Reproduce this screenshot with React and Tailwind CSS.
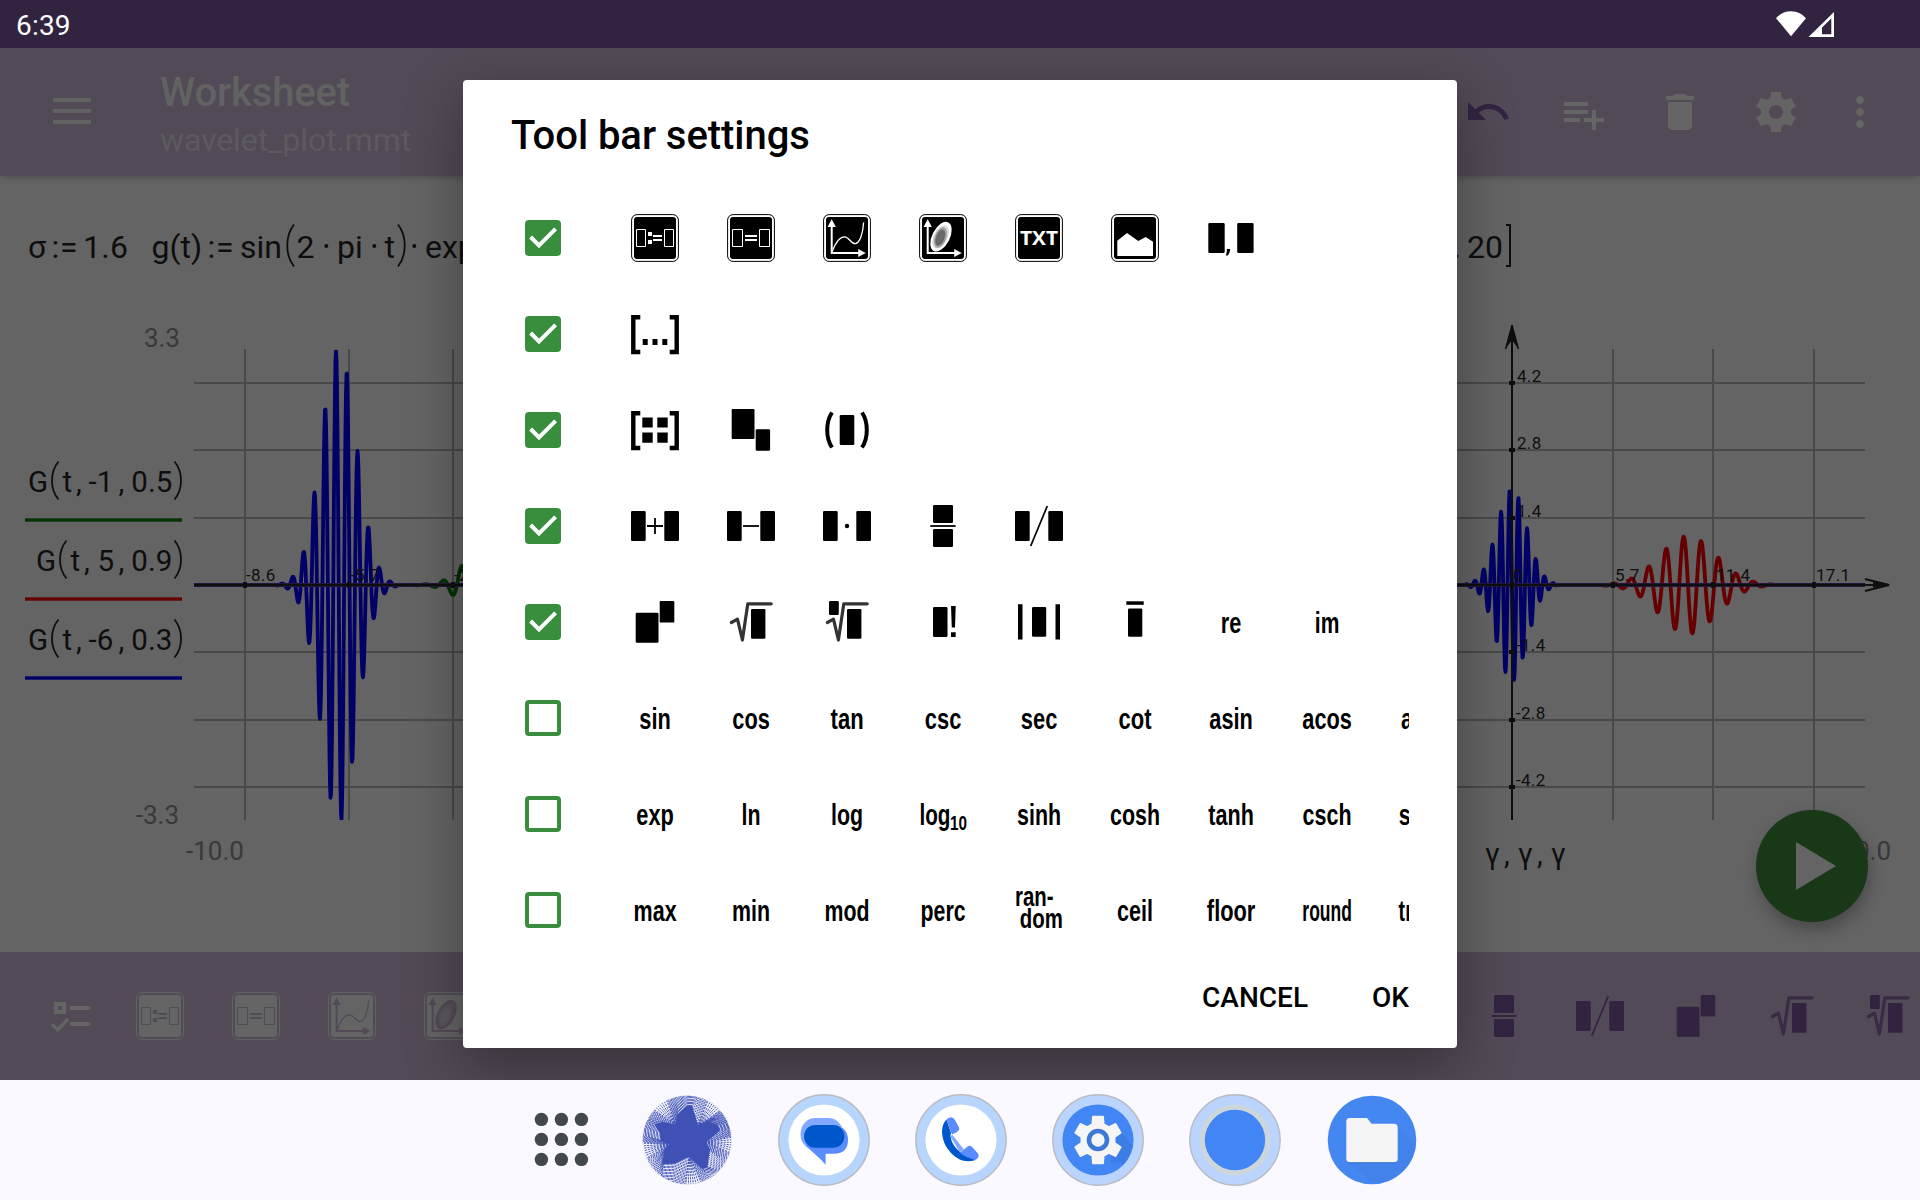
import React from "react";

/* ---------- toolbar glyphs, drawn on a 48x48 grid ---------- */

const Box = ({ x, y, w, h, r = 1.2 }) => (
  <rect x={x} y={y} width={w} height={h} rx={r} fill="currentColor" />
);

const Framed = ({ children }) => (
  <>
    <rect x="0.6" y="0.6" width="46.8" height="46.8" rx="5.5" fill="none" stroke="currentColor" strokeWidth="1" />
    <rect x="3" y="3" width="42" height="42" rx="3" fill="currentColor" />
    {children}
  </>
);

const Root = () => (
  <path
    d="M4.4 24.5L10.5 21.2L15.4 42L20.8 5.8H44.2"
    fill="none"
    stroke="currentColor"
    strokeOpacity="0.8"
    strokeWidth="3.2"
    strokeLinecap="round"
    strokeLinejoin="round"
  />
);

const Pair = () => (
  <>
    <Box x={0} y={9} w={14.7} h={30} />
    <Box x={33.3} y={9} w={14.7} h={30} />
  </>
);

const Brackets = () => (
  <path
    d="M9.3 7.2H2.3V42H9.3M38.7 7.2H45.7V42H38.7"
    fill="none"
    stroke="currentColor"
    strokeWidth="4.4"
  />
);

const AxisArrows = ({ hole }) => (
  <>
    <path d="M8.7 10V39H37" fill="none" stroke={hole} strokeWidth="2" />
    <path d="M8.7 5.3L12.9 12.9H4.5ZM42.7 39L35.2 35V43Z" fill={hole} />
  </>
);

const glyphs = {
  assign: (h) => (
    <Framed>
      <path d="M5.5 15.5H14.5V32.5H5.5ZM33.5 15.5H42.5V32.5H33.5Z" fill="none" stroke={h} strokeWidth="1" />
      <path d="M17 18H21V22H17ZM17 26H21V30H17ZM22 21H31V23H22ZM22 25H31V27H22Z" fill={h} />
    </Framed>
  ),
  equal: (h) => (
    <Framed>
      <path d="M5.5 15.5H15.5V32.5H5.5ZM32.5 15.5H42.5V32.5H32.5Z" fill="none" stroke={h} strokeWidth="1" />
      <path d="M18 21H30V23H18ZM18 25H30V27H18Z" fill={h} />
    </Framed>
  ),
  plot: (h) => (
    <Framed>
      <AxisArrows hole={h} />
      <path d="M9 38C13 27 17.5 22.6 21.8 22.8C26 23 28 30 32.4 29.6C37 29 40 19 40.6 8.5" fill="none" stroke={h} strokeWidth="1.3" />
    </Framed>
  ),
  surface: (h) => (
    <Framed>
      <g transform="rotate(27 22 22.7)">
        <ellipse cx="22" cy="22.7" rx="8.8" ry="16" fill={h} />
        <ellipse cx="21.8" cy="23" rx="6.8" ry="12.6" fill="currentColor" opacity="0.15" />
      </g>
      <g transform="rotate(20 21.5 23.5)">
        <ellipse cx="21.5" cy="23.5" rx="5.8" ry="10.8" fill="currentColor" opacity="0.25" />
        <ellipse cx="21.3" cy="23.7" rx="4.3" ry="8.6" fill="currentColor" opacity="0.35" />
      </g>
      <AxisArrows hole={h} />
    </Framed>
  ),
  text: (h) => (
    <Framed>
      <text x="5" y="31.2" fontSize="19.6" fontWeight="700" fontFamily="'Open Sans', sans-serif" fill={h} textLength="38" lengthAdjust="spacingAndGlyphs">
        TXT
      </text>
    </Framed>
  ),
  image: (h) => (
    <Framed>
      <path d="M6.3 26.7L16 19L27.3 27L34.7 23L42 27.7V42H6.3Z" fill={h} />
    </Framed>
  ),
  comma: () => (
    <>
      <Box x={1.3} y={9} w={16.4} h={30} />
      <Box x={30.2} y={9} w={16.4} h={30} />
      <path d="M19.8 35H23.2C23 38 22 40 20.6 41.4H18.8C19.6 39.6 20 37.5 19.8 35Z" fill="currentColor" />
    </>
  ),
  range: () => (
    <>
      <Brackets />
      <path d="M11.7 29H16.7V35H11.7ZM21.5 29H26.5V35H21.5ZM31.3 29H36.3V35H31.3Z" fill="currentColor" />
    </>
  ),
  matrix: () => (
    <>
      <Brackets />
      <path d="M11.3 11.5H21.7V21.5H11.3ZM26.3 11.5H36.7V21.5H26.3ZM11.3 26.5H21.7V36.7H11.3ZM26.3 26.5H36.7V36.7H26.3Z" fill="currentColor" />
    </>
  ),
  subscript: () => (
    <>
      <Box x={4.7} y={3} w={22.8} h={30} />
      <Box x={28.7} y={23.3} w={14.4} h={21.5} />
    </>
  ),
  parens: () => (
    <>
      <Box x={16.7} y={9} w={14.6} h={30} />
      <path d="M9 6.5C2.6 16 2.6 32 9 41.5M39 6.5C45.4 16 45.4 32 39 41.5" fill="none" stroke="currentColor" strokeWidth="4" />
    </>
  ),
  plus: () => (
    <>
      <Pair />
      <path d="M16 24H32M24 16V32" stroke="currentColor" strokeWidth="1.8" />
    </>
  ),
  minus: () => (
    <>
      <Pair />
      <path d="M16 24H32" stroke="currentColor" strokeWidth="1.8" />
    </>
  ),
  times: () => (
    <>
      <Pair />
      <circle cx="24" cy="24" r="2.2" fill="currentColor" />
    </>
  ),
  fraction: () => (
    <>
      <Box x={14} y={3} w={20} h={18} />
      <Box x={14} y={27} w={20} h={18} />
      <path d="M11.3 24H36.6" stroke="currentColor" strokeWidth="1.8" />
    </>
  ),
  slash: () => (
    <>
      <Pair />
      <path d="M15.7 44L32.3 4" stroke="currentColor" strokeWidth="1.7" />
    </>
  ),
  power: () => (
    <>
      <Box x={4.7} y={14.8} w={22.8} h={30} />
      <Box x={28.7} y={3} w={14.6} h={21.6} />
    </>
  ),
  sqrt: () => (
    <>
      <Root />
      <Box x={24} y={11} w={14.4} h={29.8} />
    </>
  ),
  root: () => (
    <>
      <Root />
      <Box x={24} y={11} w={14.4} h={29.8} />
      <Box x={6} y={3} w={9.8} h={14} />
    </>
  ),
  factorial: () => (
    <>
      <Box x={14} y={9} w={14.5} h={30} />
      <path d="M32 8H36.7L36 29.5H32.8ZM32 34.3H36.7V39H32Z" fill="currentColor" />
    </>
  ),
  abs: () => (
    <>
      <Box x={17} y={9} w={14.2} h={29.8} />
      <path d="M3 6.3H7.5V41.5H3ZM40.5 6.3H45V41.5H40.5Z" fill="currentColor" />
    </>
  ),
  conj: () => (
    <>
      <Box x={17} y={10.4} w={14.3} h={28.4} />
      <path d="M15.3 3.3H32.7V6.8H15.3Z" fill="currentColor" />
    </>
  ),
};

const Label = ({ x, y = 34.7, size = 28.8, width, children }) => (
  <text x={x} y={y} fontSize={size} fontWeight="700" fontFamily="'Liberation Sans', sans-serif" textLength={width} lengthAdjust="spacingAndGlyphs" fill="currentColor">
    {children}
  </text>
);

const Glyph = ({ name, hole = "#fff" }) => (
  <svg viewBox="0 0 48 48" className="h-12 w-12 shrink-0 overflow-visible">
    {glyphs[name](hole)}
  </svg>
);

const FunctionLabel = ({ item }) => {
  const [name, ink] = item;
  const width = ink + 2;
  return (
    <svg viewBox="0 0 48 48" className="h-12 w-12 shrink-0 overflow-visible">
      {name === "log10" ? (
        <>
          <Label x={0.4} width={31}>log</Label>
          <Label x={31} y={40} size={19.6} width={17}>10</Label>
        </>
      ) : name === "random" ? (
        <>
          <Label x={0} y={19.7} size={28} width={38.5}>ran-</Label>
          <Label x={4.8} y={42.3} size={28} width={43}>dom</Label>
        </>
      ) : (
        <Label x={24.1 - width / 2} width={width}>{name}</Label>
      )}
    </svg>
  );
};

/* ---------- dialog ---------- */

const rows = [
  { on: true, icons: ["assign", "equal", "plot", "surface", "text", "image", "comma"] },
  { on: true, icons: ["range"] },
  { on: true, icons: ["matrix", "subscript", "parens"] },
  { on: true, icons: ["plus", "minus", "times", "fraction", "slash"] },
  { on: true, icons: ["power", "sqrt", "root", "factorial", "abs", "conj", ["re", 18.5], ["im", 22.5]] },
  { on: false, icons: [["sin", 29.5], ["cos", 35.5], ["tan", 31], ["csc", 34.5], ["sec", 34.5], ["cot", 31], ["asin", 41.5], ["acos", 47.5], ["atan", 42]] },
  { on: false, icons: [["exp", 35.5], ["ln", 17], ["log", 30], ["log10", 46], ["sinh", 42], ["cosh", 48], ["tanh", 43.5], ["csch", 47], ["sech", 46.5]] },
  { on: false, icons: [["max", 41], ["min", 36], ["mod", 43], ["perc", 43], ["random", 46], ["ceil", 34], ["floor", 46.5], ["round", 47.5], ["trunc", 47]] },
];

const Checkbox = ({ on }) =>
  on ? (
    <span className="flex h-9 w-9 shrink-0 rounded bg-[#388e3c]">
      <svg viewBox="0 0 36 36" className="h-9 w-9">
        <path d="M5.6 17L14 25.4L30.6 8.8" fill="none" stroke="#fff" strokeWidth="4" />
      </svg>
    </span>
  ) : (
    <span className="h-9 w-9 shrink-0 rounded border-4 border-[#388e3c]" />
  );

const Dialog = () => (
  <div className="flex h-[968px] w-[994px] flex-col rounded-[4px] bg-white text-black shadow-[0_18px_56px_rgba(0,0,0,0.34)]">
    <h2 className="h-[110px] pl-12 pt-8 text-[40px] leading-[48px] font-medium tracking-[-0.05px]">Tool bar settings</h2>
    <div className="flex flex-col">
      {rows.map((row, i) => (
        <div key={i} className="flex h-24 items-center pr-12 pl-[62px]">
          <Checkbox on={row.on} />
          <div className="ml-[70px] flex flex-1 items-center gap-12 overflow-hidden">
            {row.icons.map((it, j) =>
              typeof it === "string" ? <Glyph key={j} name={it} /> : <FunctionLabel key={j} item={it} />
            )}
          </div>
        </div>
      ))}
    </div>
    <div className="flex flex-1 items-start justify-end gap-16 pt-[23px] pr-12 text-[28px] leading-[34px] font-medium">
      <button>CANCEL</button>
      <button>OK</button>
    </div>
  </div>
);

/* ---------- worksheet ---------- */

const INK = "#0e0e0e";

const wave = (from, to, center, period, amp, spread) => {
  const pts = [];
  for (let x = from; x <= to; x += 0.5) {
    const d = x - center;
    const y = 585 + amp * Math.exp((-d * d) / spread) * Math.sin((2 * Math.PI * d) / period);
    pts.push(`${x.toFixed(1)} ${y.toFixed(1)}`);
  }
  return "M" + pts.join("L");
};

const Curve = ({ d, color }) => (
  <path d={d} fill="none" stroke={color} strokeWidth="3.8" strokeLinejoin="round" />
);

const gridY = [383, 450, 518, 652, 720, 787];

const LeftChart = () => (
  <svg viewBox="183 310 280 642" className="h-[642px] w-[280px]" fontFamily="Roboto, sans-serif">
    <defs>
      <clipPath id="plotArea"><rect x="194" y="350" width="300" height="470" /></clipPath>
    </defs>
    <g stroke="#494949" strokeWidth="2">
      {gridY.map((y) => <path key={y} d={`M194 ${y}H463`} />)}
      {[245, 349, 453].map((x) => <path key={x} d={`M${x} 349V820`} />)}
    </g>
    <g clipPath="url(#plotArea)">
      <Curve d={wave(415, 465, 520.6, 18.2, 140, 1744)} color="#003300" />
      <Curve d={wave(276, 400, 338.7, 10.85, 237, 628)} color="#000066" />
      <path d="M194 585H463" stroke="#241640" strokeWidth="4" />
    </g>
    <path d="M194 585H463" stroke={INK} strokeWidth="2" />
    {[245, 349, 453].map((x) => <path key={x} d={`M${x} 582V588`} stroke={INK} strokeWidth="4" />)}
    <g fill={INK} fontSize="17" letterSpacing="0.3">
      <text x="246" y="581">-8.6</text>
      <text x="350" y="581">-5.7</text>
      <text x="454" y="581">-2.9</text>
    </g>
    <text x="186" y="860" fontSize="26" fill="#393939">-10.0</text>
  </svg>
);

const RightChart = () => (
  <svg viewBox="1457 310 463 642" className="h-[642px] w-[463px]" fontFamily="Roboto, sans-serif">
    <g stroke="#494949" strokeWidth="2">
      {gridY.map((y) => <path key={y} d={`M1457 ${y}H1865`} />)}
      {[1613, 1713, 1814].map((x) => <path key={x} d={`M${x} 349V820`} />)}
    </g>
    <Curve d={wave(1603, 1775, 1688, 17.5, 49, 1592)} color="#660000" />
    <Curve d={wave(1465, 1557, 1511.9, 8.72, 96, 440)} color="#000066" />
    <path d="M1457 585H1865" stroke="#241640" strokeWidth="4" />
    <path d="M1457 585H1880M1512 340V820" stroke={INK} strokeWidth="2" />
    <path d="M1512 325L1518.6 349L1512 340L1505.4 349Z" fill={INK} />
    <path d="M1512 325L1518.4 349M1512 325L1505.6 349" stroke={INK} strokeWidth="1.4" />
    <path d="M1865 579L1889 585L1865 591" fill="none" stroke={INK} strokeWidth="2" />
    <path d="M1873 582L1889 585L1873 588Z" fill={INK} />
    {[1512, 1613, 1713, 1814].map((x) => <path key={x} d={`M${x} 582V588`} stroke={INK} strokeWidth="4" />)}
    {gridY.map((y) => <path key={y} d={`M1509 ${y}H1515`} stroke={INK} strokeWidth="4" />)}
    <g fill={INK} fontSize="17" letterSpacing="0.3">
      <text x="1517" y="382">4.2</text>
      <text x="1517" y="449">2.8</text>
      <text x="1517" y="517">1.4</text>
      <text x="1516" y="651">-1.4</text>
      <text x="1516" y="719">-2.8</text>
      <text x="1516" y="786">-4.2</text>
      <text x="1513" y="581">0</text>
      <text x="1615" y="581">5.7</text>
      <text x="1716" y="581">11.4</text>
      <text x="1816" y="581">17.1</text>
    </g>
    <text x="1891" y="860" fontSize="26" fill="#393939" textAnchor="end">20.0</text>
    <g fill={INK} fontSize="29">
      <text x="1485" y="863.5">γ</text>
      <text x="1504" y="863.5">,</text>
      <text x="1518" y="863.5">γ</text>
      <text x="1537" y="863.5">,</text>
      <text x="1551" y="863.5">γ</text>
    </g>
  </svg>
);

const legend = [
  { color: "#003300", open: 52, parts: [[28, "G"], [62.5, "t"], [76, ","], [88.5, "-1"], [118.5, ","], [131.3, "0.5"]] },
  { color: "#660000", open: 60, parts: [[36, "G"], [70.5, "t"], [84, ","], [97.5, "5"], [118.5, ","], [131.3, "0.9"]] },
  { color: "#000066", open: 52, parts: [[28, "G"], [62.5, "t"], [76, ","], [88.5, "-6"], [118.5, ","], [131.3, "0.3"]] },
];

const LegendItem = ({ item }) => (
  <svg viewBox="25 0 158 79" className="h-[79px] w-[158px]" fontFamily="Roboto, sans-serif">
    <g fill={INK} fontSize="29.5">
      {item.parts.map(([x, t], i) => <text key={i} x={x} y="47.7">{t}</text>)}
    </g>
    <path
      d={`M${item.open + 6.5} 17.5C${item.open - 2.2} 28 ${item.open - 2.2} 45 ${item.open + 6.5} 55.5M174.5 17.5C183.2 28 183.2 45 174.5 55.5`}
      fill="none"
      stroke={INK}
      strokeWidth="1.8"
    />
    <rect x="25" y="74.3" width="157" height="3.4" fill={item.color} />
  </svg>
);

const Formula = () => (
  <svg viewBox="0 176 463 134" className="h-[134px] w-[463px]" fontFamily="Roboto, sans-serif" fontSize="32" fill={INK}>
    <text x="28" y="258">σ</text>
    <text x="51.5" y="258" textLength="26">:=</text>
    <text x="83" y="258" textLength="45">1.6</text>
    <text x="151.5" y="258">g(t)</text>
    <text x="207.5" y="258" textLength="26">:=</text>
    <text x="240" y="258">sin</text>
    <text x="296.5" y="258">2</text>
    <text x="337" y="258">pi</text>
    <text x="384.5" y="258">t</text>
    <text x="425" y="258">exp</text>
    <circle cx="326.3" cy="246" r="2" />
    <circle cx="374.3" cy="246" r="2" />
    <circle cx="414.3" cy="246" r="2" />
    <path d="M294 224.5C285 236 285 255 294 266.5M398 224.5C407 236 407 255 398 266.5" fill="none" stroke={INK} strokeWidth="1.8" />
  </svg>
);

const FormulaTail = () => (
  <svg viewBox="1457 176 463 134" className="h-[134px] w-[463px]" fontFamily="Roboto, sans-serif" fontSize="32" fill={INK}>
    <text x="1452.5" y="258">.</text>
    <text x="1467" y="258">20</text>
    <path d="M1506 225H1510V266H1506" fill="none" stroke={INK} strokeWidth="2" />
  </svg>
);

const MdIcon = ({ d, dy = 0, tint = "text-[#646464]" }) => (
  <svg viewBox="0 0 24 24" className={`h-12 w-12 ${tint}`}>
    <path d={d} fill="currentColor" transform={`translate(0 ${dy})`} />
  </svg>
);

const AppBar = () => (
  <header className="relative flex h-32 shrink-0 items-center bg-[#524a56] shadow-[0_2px_6px_rgba(0,0,0,0.18)]">
    <svg viewBox="0 0 38 26" className="mb-[2px] ml-[53px] h-[26px] w-[38px] text-[#626262]">
      <path d="M0 0H38V4H0ZM0 11H38V15H0ZM0 22H38V26H0Z" fill="currentColor" />
    </svg>
    <div className="ml-[69px] flex flex-1 flex-col pt-2">
      <span className="text-[40px] leading-[48px] font-medium tracking-[-0.15px] text-[#626262]">Worksheet</span>
      <span className="text-[32px] leading-[46px] tracking-[-0.1px] text-[#5d5a5f]">wavelet_plot.mmt</span>
    </div>
    <div className="flex items-center gap-12">
      <MdIcon tint="text-[#322441]" d="M12.5 8c-2.65 0-5.05.99-6.9 2.6L2 7v9h9l-3.62-3.62c1.39-1.16 3.16-1.88 5.12-1.88 3.54 0 6.55 2.31 7.6 5.5l2.37-.78C21.08 11.03 17.15 8 12.5 8z" />
      <MdIcon dy={1} d="M14 10H2v2h12v-2zm0-4H2v2h12V6zm4 8v-4h-2v4h-4v2h4v4h2v-4h4v-2h-4zM2 16h8v-2H2v2z" />
      <MdIcon d="M6 19c0 1.1.9 2 2 2h8c1.1 0 2-.9 2-2V7H6v12zM19 4h-3.5l-1-1h-5l-1 1H5v2h14V4z" />
      <MdIcon d="M19.43 12.98c.04-.32.07-.64.07-.98s-.03-.66-.07-.98l2.11-1.65c.19-.15.24-.42.12-.64l-2-3.46c-.12-.22-.39-.3-.61-.22l-2.49 1c-.52-.4-1.08-.73-1.69-.98l-.38-2.65C14.46 2.18 14.25 2 14 2h-4c-.25 0-.46.18-.49.42l-.38 2.65c-.61.25-1.17.59-1.69.98l-2.49-1c-.23-.09-.49 0-.61.22l-2 3.46c-.13.22-.07.49.12.64l2.11 1.65c-.04.32-.07.65-.07.98s.03.66.07.98l-2.11 1.65c-.19.15-.24.42-.12.64l2 3.46c.12.22.39.3.61.22l2.49-1c.52.4 1.08.73 1.69.98l.38 2.65c.03.24.24.42.49.42h4c.25 0 .46-.18.49-.42l.38-2.65c.61-.25 1.17-.59 1.69-.98l2.49 1c.23.09.49 0 .61-.22l2-3.46c.12-.22.07-.49-.12-.64l-2.11-1.65zM12 15.5c-1.93 0-3.5-1.57-3.5-3.5s1.57-3.5 3.5-3.5 3.5 1.57 3.5 3.5-1.57 3.5-3.5 3.5z" />
    </div>
    <div className="mr-9 ml-9">
      <MdIcon d="M12 8c1.1 0 2-.9 2-2s-.9-2-2-2-2 .9-2 2 .9 2 2 2zm0 2c-1.1 0-2 .9-2 2s.9 2 2 2 2-.9 2-2-.9-2-2-2zm0 6c-1.1 0-2 .9-2 2s.9 2 2 2 2-.9 2-2-.9-2-2-2z" />
    </div>
  </header>
);

const Worksheet = () => (
  <main className="relative flex h-[776px] shrink-0 flex-col bg-[#646464]">
    <div className="flex justify-between">
      <Formula />
      <FormulaTail />
    </div>
    <div className="flex justify-between">
      <div className="flex">
        <div className="flex w-[183px] flex-col items-end pt-2 text-[26px] leading-10 text-[#393939]">
          <span className="pr-[3px]">3.3</span>
          <div className="mt-[86px] flex flex-col">
            {legend.map((item, i) => <LegendItem key={i} item={item} />)}
          </div>
          <span className="mt-[114px] pr-1">-3.3</span>
        </div>
        <LeftChart />
      </div>
      <RightChart />
    </div>
    <button className="absolute right-[52px] bottom-[30px] flex h-28 w-28 items-center justify-center rounded-full bg-[#183818] shadow-[2px_8px_16px_rgba(0,0,0,0.28)]">
      <svg viewBox="0 0 40 48" className="ml-2 h-12 w-10"><path d="M0 0L40 24L0 48Z" fill="#646464" /></svg>
    </button>
  </main>
);

const toolbar = ["assign", "equal", "plot", "surface", "text", "image", "comma", "range", "matrix", "subscript", "parens", "plus", "minus", "times", "fraction", "slash", "power", "sqrt", "root"];
const grayTools = ["assign", "equal", "plot", "surface", "text", "image"];

const BottomBar = () => (
  <nav className="flex h-32 shrink-0 items-center gap-12 overflow-hidden bg-[#524a56] pl-[47px]">
    <svg viewBox="0 0 48 48" className="-mr-[7px] h-12 w-12 shrink-0 text-[#646464]">
      <path d="M7 10H19V22H7ZM11 14V18H15V14ZM23 14H43V18H23ZM23 30H43V34H23Z" fill="currentColor" fillRule="evenodd" />
      <path d="M5 32.3L10.7 37.8L21 27" fill="none" stroke="currentColor" strokeWidth="3.4" />
    </svg>
    {toolbar.map((name) => (
      <span key={name} className={grayTools.includes(name) ? "text-[#646464]" : "text-[#322441]"}>
        <Glyph name={name} hole="#524a56" />
      </span>
    ))}
  </nav>
);

/* ---------- dock ---------- */

/* the five lobes of the star; each starts at the inner corner where the rays fan out */
const lobes = [
  [[-11, -14.5], [-9, -24], [0, -33], [4.5, -33]],
  [[10.5, -13.5], [20, -17.5], [29, -15], [31.5, -9.5]],
  [[18, 2], [22, 10], [19.5, 26], [15, 27.5]],
  [[2.3, 15.6], [-12, 22.5], [-23.5, 23], [-22, 10.5]],
  [[-16, 4], [-25, 0.5], [-26, -7.5], [-31, -15], [-24, -17]],
];

const starRays = (() => {
  const rays = [];
  const fan = 0.2;
  const ray = (x, y, a) =>
    rays.push(`M${x.toFixed(1)} ${y.toFixed(1)}L${(44.2 * Math.cos(a)).toFixed(1)} ${(44.2 * Math.sin(a)).toFixed(1)}`);
  lobes.forEach((lobe, i) => {
    const next = lobes[(i + 1) % lobes.length][0];
    const pts = [...lobe, next];
    const start = Math.atan2(lobe[0][1], lobe[0][0]);
    let end = Math.atan2(next[1], next[0]);
    if (end < start) end += 2 * Math.PI;
    for (let k = -3; k <= 3; k++) ray(lobe[0][0], lobe[0][1], start + (k * fan) / 3.5);
    const segs = pts.length - 1;
    const count = 34;
    for (let k = 0; k <= count; k++) {
      const t = (k / count) * segs;
      const s = Math.min(Math.floor(t), segs - 1);
      const f = t - s;
      const x = pts[s][0] + (pts[s + 1][0] - pts[s][0]) * f;
      const y = pts[s][1] + (pts[s + 1][1] - pts[s][1]) * f;
      ray(x, y, start + fan + ((end - start - 2 * fan) * k) / count);
    }
  });
  return rays.join("");
})();

const StarIcon = () => (
  <svg viewBox="-48 -48 96 96" className="h-24 w-24">
    <circle r="44.5" fill="#f6f6fd" stroke="#dfe0ee" strokeWidth="0.6" />
    <path d={starRays} stroke="#3f51b5" strokeWidth="0.95" strokeDasharray="2.2 0.9" fill="none" />
    <path
      d={"M" + lobes.flat().map(([x, y]) => `${x} ${y}`).join("L") + "Z"}
      fill="#3f51b5"
      stroke="#3f51b5"
      strokeWidth="2"
      strokeLinejoin="round"
    />
  </svg>
);

const Ringed = ({ ring = "#b8d5fe", inner = "#fff", children }) => (
  <svg viewBox="-48 -48 96 96" className="h-24 w-24">
    <circle r="45.2" fill={ring} stroke="#b9bcc4" strokeWidth="1.4" />
    <circle r="35.6" fill={inner} />
    {children}
  </svg>
);

const gearPath = (() => {
  const pts = [];
  for (let i = 0; i < 6; i++) {
    const a = -90 + i * 60;
    [[-20, 17], [-12.5, 24], [12.5, 24], [20, 17]].forEach(([da, r]) => {
      const t = ((a + da) * Math.PI) / 180;
      pts.push(`${(r * Math.cos(t)).toFixed(2)} ${(r * Math.sin(t)).toFixed(2)}`);
    });
  }
  return "M" + pts.join("L") + "Z";
})();

const Dock = () => (
  <footer className="flex h-[120px] shrink-0 items-center bg-[#faf9ff] pl-[513px]">
    <svg viewBox="-48 -48 96 96" className="h-24 w-24">
      {[-20, 0, 20].map((y) => [-20, 0, 20].map((x) => <circle key={`${x},${y}`} cx={x + 0.4} cy={y - 0.6} r="6.7" fill="#43484d" />))}
    </svg>
    <div className="-mt-px ml-[29.6px] flex gap-[41px]">
      <StarIcon />
      <Ringed>
        <rect x="-23.4" y="-22" width="42.4" height="32" rx="15" fill="#82a9ff" />
        <path d="M4 -15H10Q24 -13 24 0Q24 13.5 10 13.7H1.6V24.7C-5 17 -12 12 -18 6Z" fill="#5a8cff" />
        <rect x="-20" y="-15" width="40.4" height="22.7" rx="11.3" fill="#0057cc" />
      </Ringed>
      <Ringed>
        <path d="M-14.5 -20.5C-22 -13 -19 2 -12 10.5C-6 18 3 24 14.5 20L0 12.5C-7 8 -12 -2 -10 -7Z" fill="#0057cc" />
        <path d="M-11 -4L-1 12.5L3 9.5L-8.5 -5Z" fill="#82a9ff" />
        <path d="M-14.5 -20.5Q-9 -25 -6 -20L-2 -12.5Q0 -9 -9 -5.5Q-11 -10 -14.5 -20.5Z" fill="#5a8cff" />
        <path d="M-1 13L6.5 6.5Q9.5 4.5 12 8L17 13.5Q19 17 14.5 20Q6 18 -1 13Z" fill="#5a8cff" />
      </Ringed>
      <Ringed ring="#bad4fe" inner="#4285f4">
        <path d="M20 -12L34.6 6Q32 18 26 24L12 22Z" fill="#3b78dc" opacity="0.6" />
        <path d={gearPath} fill="#f5f5f5" stroke="#f5f5f5" strokeWidth="1.5" strokeLinejoin="round" />
        <circle r="9" fill="none" stroke="#3d77d8" strokeWidth="4.6" />
      </Ringed>
      <Ringed ring="#bad4fe" inner="#ccd6dc">
        <circle r="30.2" fill="#4285f4" />
      </Ringed>
      <svg viewBox="-48 -48 96 96" className="h-24 w-24">
        <circle r="44.3" fill="#4587f1" />
        <path d="M25 -14L44 4Q42 30 12 42L0 42L-24 22Z" fill="#3f7ee3" opacity="0.55" />
        <path d="M-22.5 -22H-5L-0.5 -16.2H22Q25.7 -16.2 25.7 -12.5V18.5Q25.7 22.3 22 22.3H-22Q-25.7 22.3 -25.7 18.5V-18.5Q-25.7 -22 -22.5 -22Z" fill="#f5f5f5" />
        <path d="M-24 22.8H24" stroke="#3469bd" strokeWidth="1" opacity="0.6" />
      </svg>
    </div>
  </footer>
);

const StatusBar = () => (
  <div className="flex h-12 shrink-0 items-center justify-between bg-[#322441] pr-[86px] pl-4 text-white">
    <span className="pt-1 text-[28px] leading-8 tracking-[0.2px]">6:39</span>
    <svg viewBox="0 0 58 26" className="mb-px h-[26px] w-[58px]">
      <path d="M0 7.2Q6 0.5 15 0.3Q24 0.5 30 7.2L15 25.2Z" fill="#fff" />
      <path d="M58 1V26H32.5ZM55.3 7.6L46 16.6V23.2H55.3Z" fill="#fff" fillRule="evenodd" />
    </svg>
  </div>
);

export default function App() {
  return (
    <div className="flex h-[1200px] w-[1920px] flex-col overflow-hidden font-[Roboto,sans-serif]">
      <StatusBar />
      <div className="relative flex h-[1032px] shrink-0 flex-col overflow-hidden">
        <div className="relative z-10 flex flex-col">
          <AppBar />
        </div>
        <Worksheet />
        <BottomBar />
        <div className="absolute inset-0 z-20 flex items-center justify-center">
          <Dialog />
        </div>
      </div>
      <Dock />
    </div>
  );
}
